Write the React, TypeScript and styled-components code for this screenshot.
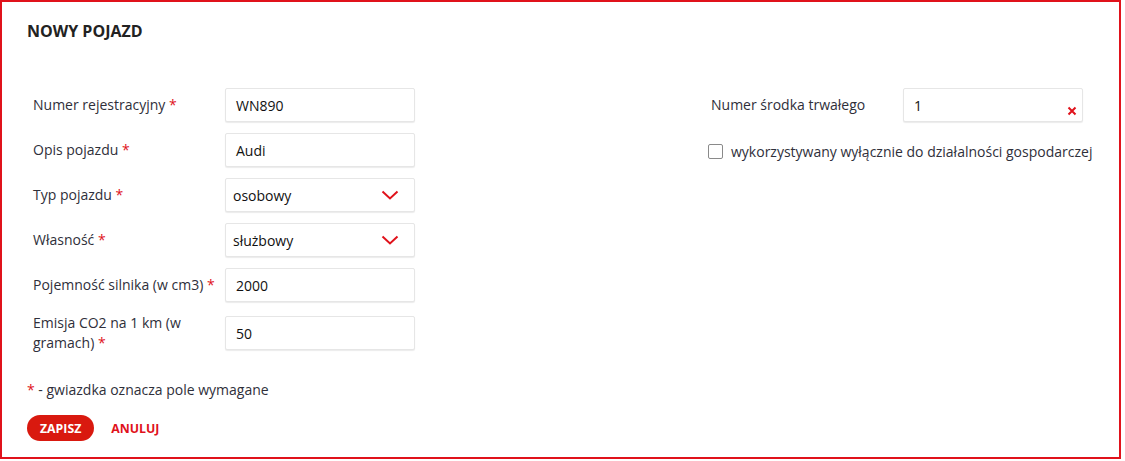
import React from "react";
import styled, { createGlobalStyle } from "styled-components";

const Global = createGlobalStyle`
  html, body { margin: 0; padding: 0; background: #fff; }
  body { font-family: "Open Sans", "Liberation Sans", sans-serif; color: #2f2f3a; }
  * { box-sizing: border-box; }
`;

const RED = "#e0121b";

const Frame = styled.div`
  width: 1121px;
  height: 459px;
  border: 2px solid ${RED};
  padding: 19px 25px 0 25px;
`;

const Title = styled.h1`
  margin: 0;
  font-size: 16px;
  font-weight: 700;
  color: #222;
  line-height: 20px;
`;

const Columns = styled.div`
  display: flex;
  margin-top: 47px;
`;

const LeftCol = styled.div`
  width: 684px;
  display: flex;
  flex-direction: column;
  gap: 11px;
  padding-left: 6px;
`;

const RightCol = styled.div`
  display: flex;
  flex-direction: column;
`;

const Row = styled.div`
  display: flex;
  align-items: center;
`;

const Label = styled.label<{ $w?: number }>`
  width: ${(p) => p.$w ?? 192}px;
  font-size: 14px;
  line-height: 20px;
  color: #2f2f3a;
  padding-right: 8px;
`;

const Line = styled.span`
  display: block;
  white-space: nowrap;
`;

const Star = styled.span`
  color: ${RED};
`;

const Field = styled.div<{ $w?: number }>`
  position: relative;
  width: ${(p) => p.$w ?? 190}px;
  height: 34px;
  border: 1px solid #e6e6e6;
  border-radius: 2px;
  box-shadow: 0 1px 1px rgba(0, 0, 0, 0.08);
  display: flex;
  align-items: center;
  padding: 0 10px;
  font-size: 14px;
  color: #111;
  background: #fff;
`;

const SelectField = styled(Field)`
  padding-left: 7px;
  justify-content: space-between;
`;

const Chevron = styled.svg`
  width: 18px;
  height: 10px;
  margin-right: 5px;
`;

const ClearX = styled.svg`
  position: absolute;
  right: 5px;
  bottom: 5px;
  width: 10px;
  height: 10px;
`;

const CheckRow = styled.div`
  display: flex;
  align-items: center;
  margin-top: 20px;
  margin-left: -3px;
  font-size: 14px;
  color: #2f2f3a;
`;

const Box = styled.span`
  width: 15px;
  height: 15px;
  border: 1px solid #8a8a8a;
  border-radius: 2px;
  margin-right: 8px;
  background: #fff;
`;

const Note = styled.div`
  margin-top: 27px;
  font-size: 14px;
  color: #2f2f3a;
`;

const Actions = styled.div`
  display: flex;
  align-items: center;
  gap: 17px;
  margin-top: 16px;
`;

const Primary = styled.button`
  height: 26px;
  padding: 0 13px;
  border: none;
  border-radius: 13px;
  background: #d9190f;
  color: #fff;
  font-family: inherit;
  font-weight: 700;
  font-size: 12.3px;
`;

const Link = styled.button`
  border: none;
  background: none;
  padding: 0;
  color: ${RED};
  font-family: inherit;
  font-weight: 700;
  font-size: 12.3px;
`;

const ChevronIcon = () => (
  <Chevron viewBox="0 0 18 10">
    <path d="M1.5 1.5 L9 8.5 L16.5 1.5" fill="none" stroke={RED} strokeWidth="2" />
  </Chevron>
);

export default function App() {
  return (
    <>
      <Global />
      <Frame>
        <Title>NOWY POJAZD</Title>
        <Columns>
          <LeftCol>
            <Row>
              <Label>Numer rejestracyjny <Star>*</Star></Label>
              <Field>WN890</Field>
            </Row>
            <Row>
              <Label>Opis pojazdu <Star>*</Star></Label>
              <Field>Audi</Field>
            </Row>
            <Row>
              <Label>Typ pojazdu <Star>*</Star></Label>
              <SelectField>osobowy<ChevronIcon /></SelectField>
            </Row>
            <Row>
              <Label>Własność <Star>*</Star></Label>
              <SelectField>służbowy<ChevronIcon /></SelectField>
            </Row>
            <Row>
              <Label>Pojemność silnika (w cm3) <Star>*</Star></Label>
              <Field>2000</Field>
            </Row>
            <Row>
              <Label>
                <Line>Emisja CO2 na 1 km (w</Line>
                <Line>gramach) <Star>*</Star></Line>
              </Label>
              <Field>50</Field>
            </Row>
          </LeftCol>
          <RightCol>
            <Row>
              <Label>Numer środka trwałego</Label>
              <Field $w={180}>
                1
                <ClearX viewBox="0 0 10 10">
                  <path d="M1.5 1.5 L8.5 8.5 M8.5 1.5 L1.5 8.5" stroke={RED} strokeWidth="2" />
                </ClearX>
              </Field>
            </Row>
            <CheckRow>
              <Box />
              wykorzystywany wyłącznie do działalności gospodarczej
            </CheckRow>
          </RightCol>
        </Columns>
        <Note><Star>*</Star> - gwiazdka oznacza pole wymagane</Note>
        <Actions>
          <Primary>ZAPISZ</Primary>
          <Link>ANULUJ</Link>
        </Actions>
      </Frame>
    </>
  );
}
